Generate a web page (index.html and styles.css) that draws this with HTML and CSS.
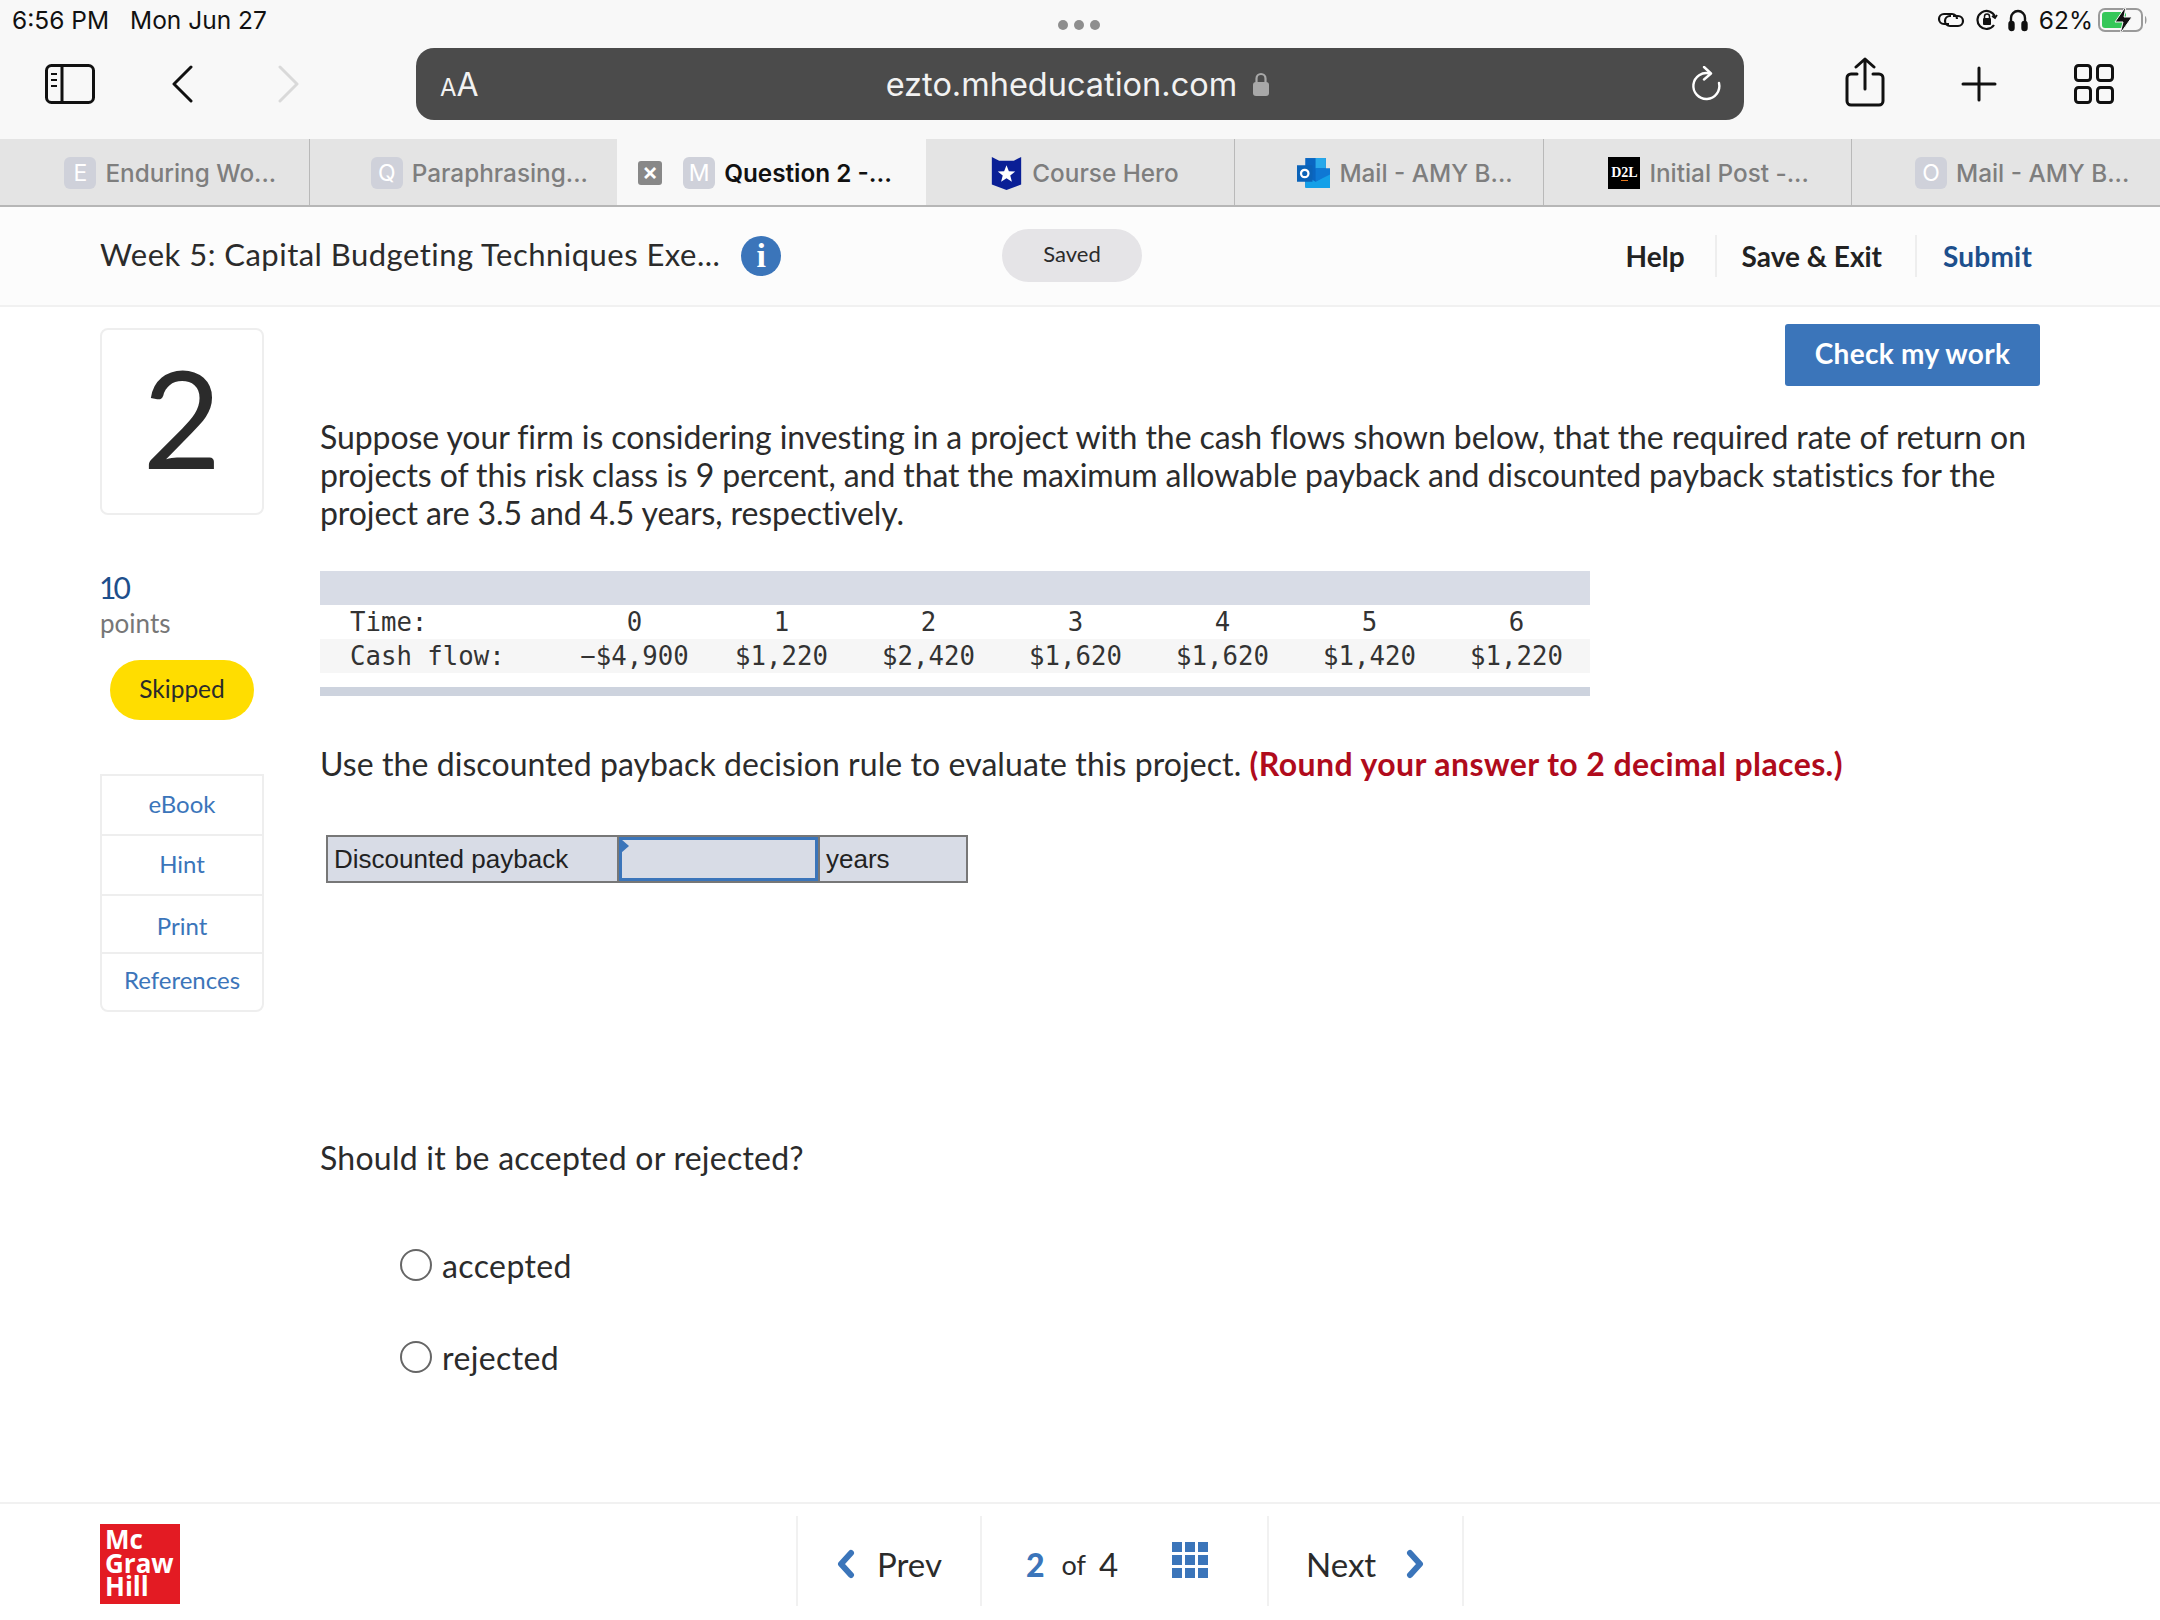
FILE: index.html
```html
<!DOCTYPE html>
<html lang="en">
<head>
    <meta charset="UTF-8">
    <title>Question 2 - Week 5: Capital Budgeting Techniques</title>
    <link rel="stylesheet" href="styles.css">
</head>
<body>
    <!-- ipad status bar -->
    <div class="status-bar">
        <div class="status-time"><span>6:56 PM</span><span>Mon Jun 27</span></div>
        <div class="status-dots"><i></i><i></i><i></i></div>
        <div class="status-right">
            <svg class="st-link" viewBox="0 0 28 20" fill="none" stroke="#111" stroke-width="2.2"><path d="M12 14H7a5 5 0 0 1 0-10h8a5 5 0 0 1 5 5"/><path d="M8 11a5 5 0 0 1 5-5h1M16 6h5a5 5 0 0 1 0 10h-8a5 5 0 0 1-5-5"/></svg>
            <svg class="st-lock" viewBox="0 0 22 24" fill="none" stroke="#111" stroke-width="2.2"><path d="M18 17a9 9 0 1 1 1-8"/><path d="M21 7l-2 3-3-2" stroke-width="1.8"/><rect x="7" y="10" width="8" height="7" rx="1" fill="#111" stroke="none"/><path d="M8.5 10V8.5a2.5 2.5 0 0 1 5 0V10" stroke-width="1.5"/></svg>
            <svg class="st-phones" viewBox="0 0 20 24" fill="none" stroke="#111" stroke-width="2.4"><path d="M3 16V10a7 7 0 0 1 14 0v6"/><rect x="1.5" y="14" width="4" height="8" rx="2" fill="#111"/><rect x="14.5" y="14" width="4" height="8" rx="2" fill="#111"/></svg>
            <span class="st-percent">62%</span>
            <svg class="st-battery" viewBox="0 0 50 28"><rect x="1" y="3" width="43" height="22" rx="6" fill="none" stroke="#9a9a9a" stroke-width="2"/><path d="M47 10c2 1 2 7 0 8z" fill="#9a9a9a"/><rect x="4" y="6" width="24" height="16" rx="3" fill="#35c759"/><path d="M28 0L17 16h8l-3 12 12-17h-8z" fill="#111" stroke="#f8f8f8" stroke-width="1"/></svg>
        </div>
    </div>

    <!-- safari toolbar -->
    <div class="toolbar">
        <svg class="ic-sidebar" viewBox="0 0 50 40" fill="none" stroke="#111" stroke-width="3"><rect x="1.5" y="1.5" width="47" height="37" rx="5"/><path d="M17 2v36"/><path d="M6 10h6M6 16h6M6 22h6" stroke-width="2.2"/></svg>
        <svg class="ic-back" viewBox="0 0 22 38" fill="none" stroke="#111" stroke-width="3" stroke-linecap="round" stroke-linejoin="round"><path d="M20 2L3 19l17 17"/></svg>
        <svg class="ic-forward" viewBox="0 0 22 38" fill="none" stroke="#d9d9d9" stroke-width="3" stroke-linecap="round" stroke-linejoin="round"><path d="M2 2l17 17L2 36"/></svg>
        <div class="url-bar">
            <span class="url-aa"><small>A</small>A</span>
            <span class="url-host">ezto.mheducation.com
                <svg class="ic-lock" viewBox="0 0 18 24"><rect x="1" y="10" width="16" height="14" rx="3" fill="#a8a8a8"/><path d="M4.5 11V6.5a4.5 4.5 0 0 1 9 0V11" fill="none" stroke="#a8a8a8" stroke-width="2.2"/></svg>
            </span>
            <svg class="ic-reload" viewBox="0 0 32 36" fill="none" stroke="#fff" stroke-width="2.4" stroke-linecap="round" stroke-linejoin="round"><path d="M20 7.5A13 13 0 1 0 29 17"/><path d="M14 1l7 6.500-7 6"/></svg>
        </div>
        <svg class="ic-share" viewBox="0 0 40 50" fill="none" stroke="#111" stroke-width="3" stroke-linecap="round" stroke-linejoin="round"><path d="M12 17H6a4 4 0 0 0-4 4v23a4 4 0 0 0 4 4h28a4 4 0 0 0 4-4V21a4 4 0 0 0-4-4h-6"/><path d="M20 32V2M11 10l9-8 9 8"/></svg>
        <svg class="ic-plus" viewBox="0 0 36 36" fill="none" stroke="#111" stroke-width="3" stroke-linecap="round"><path d="M18 2v32M2 18h32"/></svg>
        <svg class="ic-tabs" viewBox="0 0 40 40" fill="none" stroke="#111" stroke-width="3"><rect x="1.500" y="1.500" width="15" height="15" rx="3"/><rect x="23.500" y="1.500" width="15" height="15" rx="3"/><rect x="1.500" y="23.500" width="15" height="15" rx="3"/><rect x="23.500" y="23.500" width="15" height="15" rx="3"/></svg>
    </div>

    <!-- tabs -->
    <div class="tabs">
        <div class="tab"><span class="fav">E</span>Enduring Wo...</div>
        <div class="tab"><span class="fav">Q</span>Paraphrasing...</div>
        <div class="tab tab-active"><span class="tab-close">×</span><span class="fav">M</span>Question 2 -...</div>
        <div class="tab tab-hero">
            <svg class="fav-svg" viewBox="0 0 32 36"><path d="M0 0l8 4h16l8-4v30l-16 6-16-6z" fill="#0a1f96"/><path d="M16 9l2.600 6.500 6.900.4-5.400 4.400 1.800 6.700-5.900-3.800-5.900 3.800 1.800-6.700-5.400-4.400 6.900-.4z" fill="#fff"/></svg>
            Course Hero
        </div>
        <div class="tab">
            <svg class="fav-svg" viewBox="0 0 32 32"><rect x="8" y="1" width="20" height="28" fill="#0a66c2"/><rect x="18" y="1" width="10" height="10" fill="#28a8ea"/><path d="M8 18l10 6 14-9v15H8z" fill="#14a0e8"/><path d="M18 11h14v6l-14 7z" fill="#0f78d4"/><rect x="0" y="8" width="15" height="16" fill="#0b63b8"/><circle cx="7.500" cy="16" r="3.600" fill="none" stroke="#fff" stroke-width="2.200"/></svg>
            Mail - AMY B...
        </div>
        <div class="tab tab-d2l"><span class="fav fav-d2l">D<b>2</b>L</span>Initial Post -...</div>
        <div class="tab"><span class="fav">O</span>Mail - AMY B...</div>
    </div>

    <!-- assignment header -->
    <header class="page-header">
        <div class="title-wrap">
            <span class="page-title">Week 5: Capital Budgeting Techniques Exe...</span>
            <span class="info-dot">i</span>
        </div>
        <span class="saved-pill">Saved</span>
        <nav class="header-links">
            <a href="#">Help</a>
            <a href="#">Save &amp; Exit</a>
            <a href="#" class="link-submit">Submit</a>
        </nav>
    </header>

    <div class="main">
        <aside class="side">
            <div class="q-number">2</div>
            <div class="points-val">10</div>
            <div class="points-label">points</div>
            <div class="skipped">Skipped</div>
            <ul class="tools">
                <li>eBook</li>
                <li>Hint</li>
                <li>Print</li>
                <li>References</li>
            </ul>
        </aside>

        <section class="content">
            <div class="check-row"><button class="check-btn">Check my work</button></div>
            <p class="q-text">Suppose your firm is considering investing in a project with the cash flows shown below, that the required rate of return on projects of this risk class is 9 percent, and that the maximum allowable payback and discounted payback statistics for the project are 3.5 and 4.5 years, respectively.</p>

            <table class="cash-table">
                <colgroup>
                    <col class="col-label">
                    <col span="7" class="col-num">
                </colgroup>
                <thead><tr><th colspan="8"></th></tr></thead>
                <tbody>
                    <tr>
                        <td class="lbl">Time:</td>
                        <td>0</td><td>1</td><td>2</td><td>3</td><td>4</td><td>5</td><td>6</td>
                    </tr>
                    <tr class="shade">
                        <td class="lbl">Cash flow:</td>
                        <td>−$4,900</td><td>$1,220</td><td>$2,420</td><td>$1,620</td><td>$1,620</td><td>$1,420</td><td>$1,220</td>
                    </tr>
                </tbody>
            </table>
            <div class="table-foot"></div>

            <p class="q-rule">Use the discounted payback decision rule to evaluate this project. <strong>(Round your answer to 2 decimal places.)</strong></p>

            <div class="answer-row">
                <div class="ans-label">Discounted payback</div>
                <div class="ans-input"></div>
                <div class="ans-unit">years</div>
            </div>

            <p class="q-should">Should it be accepted or rejected?</p>

            <label class="radio-row"><span class="radio"></span>accepted</label>
            <label class="radio-row"><span class="radio"></span>rejected</label>
        </section>
    </div>

    <footer class="page-footer">
        <div class="mh-logo"><span>Mc</span><span>Graw</span><span>Hill</span></div>
        <div class="pager">
            <div class="pager-cell cell-prev">
                <svg class="chev" viewBox="0 0 20 30" fill="none" stroke="#3b75ba" stroke-width="6" stroke-linecap="round" stroke-linejoin="round"><path d="M15 4L5 15l10 11"/></svg>
                Prev
            </div>
            <div class="pager-cell cell-count">
                <b>2</b><span class="of">of</span><span>4</span>
                <span class="grid-ic"><i></i><i></i><i></i><i></i><i></i><i></i><i></i><i></i><i></i></span>
            </div>
            <div class="pager-cell cell-next">
                Next
                <svg class="chev" viewBox="0 0 20 30" fill="none" stroke="#3b75ba" stroke-width="6" stroke-linecap="round" stroke-linejoin="round"><path d="M5 4l10 11L5 26"/></svg>
            </div>
        </div>
    </footer>
</body>
</html>
```

FILE: styles.css
```css
* {
    margin: 0;
    padding: 0;
    box-sizing: border-box;
}

html, body {
    height: 1620px;
    overflow: hidden;
}

body {
    background: #fff;
    font-family: 'Lato', sans-serif;
    color: #2b2b2b;
    display: flex;
    flex-direction: column;
}

/* status bar */
.status-bar {
    height: 48px;
    background: #f8f8f8;
    display: flex;
    align-items: center;
    justify-content: space-between;
    padding: 0 12px 8px 12px;
    font-family: 'Inter', sans-serif;
    font-size: 24.500px;
    color: #111;
    position: relative;
}

.status-time span {
    margin-right: 21px;
}

.status-dots {
    position: absolute;
    left: 1058px;
    top: 20px;
    display: flex;
    gap: 6px;
}

.status-dots i {
    width: 10px;
    height: 10px;
    border-radius: 50%;
    background: #8e8e8e;
}

.status-right {
    display: flex;
    align-items: center;
}

.st-link { width: 28px; height: 20px; margin-right: 11px; }
.st-lock { width: 22px; height: 24px; margin-right: 10px; }
.st-phones { width: 20px; height: 24px; margin-right: 11px; }
.st-percent { margin-right: 5px; }
.st-battery { width: 50px; height: 28px; }

/* toolbar */
.toolbar {
    height: 91px;
    background: #f8f8f8;
    display: flex;
    align-items: center;
    padding-left: 45px;
    padding-bottom: 19px;
}

.toolbar svg {
    flex: none;
}

.ic-sidebar { width: 50px; height: 40px; margin-right: 76px; }
.ic-back { width: 22px; height: 38px; margin-right: 85px; }
.ic-forward { width: 22px; height: 38px; margin-right: 116px; }

.url-bar {
    width: 1328px;
    height: 72px;
    background: #4b4b4b;
    border-radius: 18px;
    display: flex;
    align-items: center;
    padding: 0 22px 0 24px;
    color: #f2f2f2;
    font-family: 'Inter', sans-serif;
    margin-right: 101px;
}

.url-aa {
    font-size: 32px;
    width: 40px;
    white-space: nowrap;
}

.url-aa small {
    font-size: 24px;
}

.url-host {
    flex: 1;
    text-align: center;
    font-size: 32.500px;
    padding-right: 14px;
}

.ic-lock {
    width: 18px;
    height: 24px;
    margin-left: 6px;
}

.ic-reload { width: 32px; height: 36px; }
.ic-share { width: 40px; height: 50px; margin-right: 76px; margin-top: -4px; }
.ic-plus { width: 36px; height: 36px; margin-right: 77px; }
.ic-tabs { width: 40px; height: 40px; }

/* tabs */
.tabs {
    height: 68px;
    display: flex;
    background: #e4e4e4;
    border-bottom: 2px solid #b6b6b6;
    font-family: 'Inter', sans-serif;
    font-size: 24.300px;
    font-weight: 500;
    color: #7e7e7e;
}

.tab {
    width: calc(100% / 7);
    flex: none;
    display: flex;
    align-items: center;
    justify-content: center;
    gap: 9px;
    padding: 2px 0 0 32px;
    border-left: 1px solid #b9b9b9;
    white-space: nowrap;
}

.tab:first-child {
    border-left: none;
}

.tab-active {
    background: #f8f8f8;
    color: #111;
    border-left: none;
    justify-content: flex-start;
    padding-left: 21px;
    font-weight: 600;
}

.tab-active + .tab {
    border-left: none;
}

.tab-hero {
    padding-left: 9px;
}

.tab-d2l {
    padding-left: 22px;
}

.tab-close {
    width: 24px;
    height: 24px;
    background: #888;
    color: #fff;
    border-radius: 3px;
    font-size: 24px;
    line-height: 22px;
    text-align: center;
    margin-right: 12px;
}

.fav {
    width: 32px;
    height: 32px;
    flex: none;
    background: #cfd1da;
    color: #fff;
    border-radius: 6px;
    font-size: 23px;
    font-weight: 400;
    line-height: 32px;
    text-align: center;
}

.fav-d2l {
    background: #000;
    border-radius: 0;
    font-family: 'Liberation Serif', serif;
    font-size: 14px;
    font-weight: 700;
    color: #fff;
    white-space: nowrap;
}

.fav-d2l b {
    border-bottom: 1px solid #e8791e;
}

.fav-svg {
    width: 33px;
    height: 33px;
    flex: none;
}

/* assignment header */
.page-header {
    height: 100px;
    background: #fcfcfc;
    border-bottom: 2px solid #f1f1f1;
    display: flex;
    align-items: center;
    padding: 0 128px 0 100px;
}

.title-wrap {
    width: 902px;
    display: flex;
    align-items: center;
    gap: 21px;
}

.page-title {
    font-size: 31px;
    letter-spacing: 0.48px;
    white-space: nowrap;
    margin-top: -5px;
}

.info-dot {
    width: 40px;
    height: 40px;
    margin-top: -1px;
    border-radius: 50%;
    background: #3b75ba;
    color: #fff;
    font-family: 'Liberation Serif', serif;
    font-weight: 700;
    font-size: 34px;
    line-height: 40px;
    text-align: center;
}

.saved-pill {
    width: 140px;
    height: 53px;
    margin-top: -1px;
    background: #e5e4e7;
    border-radius: 27px;
    font-size: 22px;
    line-height: 50px;
    text-align: center;
}

.header-links {
    margin-left: auto;
    display: flex;
    align-items: center;
    height: 42px;
}

.header-links a {
    font-size: 28px;
    font-weight: 700;
    color: #222;
    text-decoration: none;
    padding: 0 33px 0 25px;
    line-height: 42px;
    border-left: 2px solid #eee;
}

.header-links a:first-child {
    border-left: none;
    padding-right: 30px;
}

.header-links a.link-submit {
    color: #1d4f8c;
    padding: 0 0 0 26px;
    letter-spacing: 0.2px;
}

/* main area */
.main {
    flex: 1;
    min-height: 0;
    display: flex;
    padding: 0 120px 0 100px;
}

.side {
    width: 220px;
    flex: none;
    padding-top: 21px;
}

.q-number {
    width: 164px;
    height: 187px;
    border: 2px solid #eee;
    border-radius: 8px;
    font-size: 136px;
    line-height: 173px;
    text-align: center;
}

.points-val {
    margin: 54px 0 0 -1px;
    font-size: 30px;
    letter-spacing: -3px;
    line-height: 36px;
    color: #1d4f8c;
}

.points-label {
    margin-top: 1px;
    font-size: 26px;
    line-height: 34px;
    color: #777;
}

.skipped {
    width: 144px;
    height: 60px;
    margin: 20px 0 0 10px;
    background: #ffdd00;
    border-radius: 30px;
    font-size: 24.500px;
    line-height: 58px;
    text-align: center;
}

.tools {
    list-style: none;
    width: 164px;
    margin-top: 54px;
    border: 2px solid #eee;
    border-radius: 0 0 8px 8px;
    font-size: 24px;
    color: #3b75ba;
    text-align: center;
}

.tools li {
    height: 60px;
    line-height: 56px;
    border-bottom: 2px solid #eee;
}

.tools li:nth-child(3) {
    height: 58px;
    line-height: 60px;
}

.tools li:last-child {
    height: 56px;
    line-height: 52px;
    border-bottom: none;
}

/* question */
.content {
    flex: 1;
    min-width: 0;
}

.check-row {
    display: flex;
    justify-content: flex-end;
    padding-top: 17px;
}

.check-btn {
    width: 255px;
    height: 62px;
    padding-bottom: 5px;
    background: #3b75ba;
    color: #fff;
    border: none;
    border-radius: 3px;
    font-family: 'Lato', sans-serif;
    font-size: 28px;
    font-weight: 700;
    letter-spacing: 0.3px;
}

.q-text {
    margin-top: 32px;
    font-size: 32px;
    letter-spacing: -0.08px;
    line-height: 38px;
}

.cash-table {
    width: 1270px;
    margin-top: 39px;
    border-collapse: collapse;
    table-layout: fixed;
    font-family: 'DejaVu Sans Mono', monospace;
    font-size: 25.700px;
    color: #333;
}

.col-label {
    width: 241px;
}

.col-num {
    width: 147px;
}

.cash-table th {
    height: 34px;
    background: #d8dce6;
}

.cash-table td {
    height: 34px;
    text-align: center;
    white-space: nowrap;
}

.cash-table td.lbl {
    text-align: left;
    padding-left: 30px;
}

.shade td {
    background: #f6f6f6;
}

.table-foot {
    width: 1270px;
    height: 9px;
    margin-top: 14px;
    background: #cdd3de;
}

.q-rule {
    margin-top: 49px;
    font-size: 32px;
    letter-spacing: 0.07px;
    line-height: 38px;
}

.q-rule strong {
    color: #b00b1c;
    letter-spacing: 0.42px;
}

.answer-row {
    display: flex;
    width: 642px;
    height: 48px;
    margin: 52px 0 0 6px;
    border: 2px solid #777;
    background: #d8dce6;
    font-family: 'Liberation Sans', sans-serif;
    font-size: 26px;
    line-height: 44px;
    color: #222;
}

.ans-label {
    width: 291px;
    padding-left: 6px;
    border-right: 2px solid #777;
}

.ans-input {
    width: 199px;
    border: 3px solid #3b75ba;
    position: relative;
}

.ans-input::before {
    content: "";
    position: absolute;
    left: -1px;
    top: -1px;
    border-left: 8px solid #3b75ba;
    border-top: 7px solid transparent;
    border-bottom: 7px solid transparent;
}

.ans-unit {
    flex: 1;
    padding-left: 6px;
    border-left: 2px solid #777;
}

.q-should {
    margin-top: 256px;
    font-size: 32px;
    letter-spacing: 0.25px;
    line-height: 38px;
}

.radio-row {
    display: flex;
    align-items: center;
    gap: 10px;
    height: 40px;
    margin: 67px 0 0 80px;
    font-size: 32px;
    letter-spacing: 0.4px;
}

.q-should + .radio-row {
    margin-top: 68px;
}

.radio-row + .radio-row {
    margin-top: 52px;
}

.radio {
    width: 32px;
    height: 32px;
    border: 2px solid #666;
    border-radius: 50%;
    background: #fff;
}

/* footer */
.page-footer {
    height: 118px;
    border-top: 2px solid #f1f1f1;
    display: flex;
    padding: 20px 0 0 100px;
}

.mh-logo {
    width: 80px;
    height: 80px;
    background: #e31b23;
    color: #fff;
    font-family: 'Open Sans', sans-serif;
    font-weight: 700;
    font-size: 26px;
    padding: 4px 0 0 5px;
}

.mh-logo span {
    display: block;
    height: 23.500px;
    line-height: 23.500px;
}

.pager {
    display: flex;
    height: 90px;
    margin: -8px 0 0 616px;
    border-right: 2px solid #f1f1f1;
    font-size: 33px;
}

.pager-cell {
    display: flex;
    align-items: center;
    height: 100%;
    border-left: 2px solid #f1f1f1;
    padding-top: 6px;
}

.cell-prev {
    width: 184px;
    padding-left: 38px;
    gap: 21px;
}

.cell-count {
    width: 287px;
    padding-left: 44px;
    color: #2b2b2b;
}

.cell-count b {
    color: #3b75ba;
    font-size: 32px;
    font-weight: 900;
    margin-right: 17px;
}

.cell-count .of {
    font-size: 27px;
    margin-right: 13px;
}

.grid-ic {
    display: grid;
    grid-template-columns: repeat(3, 10px);
    grid-auto-rows: 10px;
    gap: 3px;
    margin-left: 54px;
    margin-top: -8px;
}

.grid-ic i {
    background: #3b75ba;
}

.cell-next {
    width: 195px;
    padding-left: 37px;
    gap: 29px;
}

.chev {
    width: 20px;
    height: 30px;
    flex: none;
}
```
